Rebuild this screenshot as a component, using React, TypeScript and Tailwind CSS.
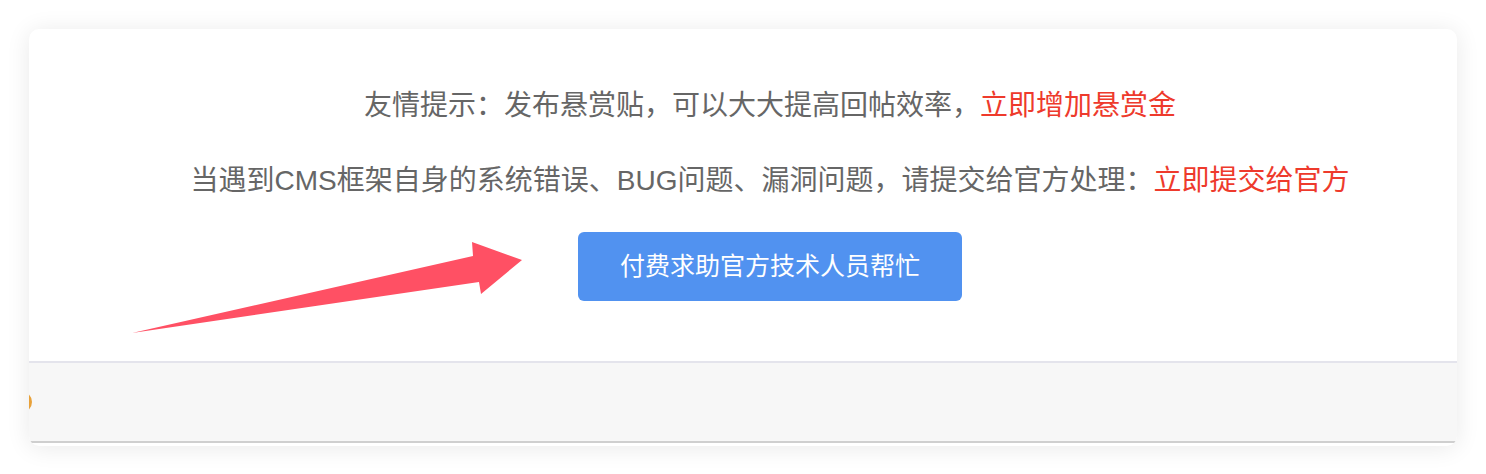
export default function App() {
  const font = { fontFamily: '"Liberation Sans", "Noto Sans CJK SC", sans-serif' };

  return (
    <div className="min-h-screen bg-white pt-[29px] pl-[29px] pr-[29px]" style={font}>
      <div className="relative w-[1428px] rounded-[10px] bg-white shadow-[0_2px_24px_rgba(0,0,0,0.09)] overflow-hidden pb-[3px]">
        {/* 主体提示 */}
        <div className="flex flex-col items-center pl-[54px] pt-[57px] pb-[60px] border-b-2 border-[#e4e4ec]">
          <p className="text-[28px] leading-[40px] text-[#666666]">
            友情提示：发布悬赏贴，可以大大提高回帖效率，
            <a className="text-[#ee3a2c]">立即增加悬赏金</a>
          </p>
          <p className="mt-[35px] text-[28px] leading-[40px] text-[#666666]">
            当遇到CMS框架自身的系统错误、BUG问题、漏洞问题，请提交给官方处理：
            <a className="text-[#ee3a2c]">立即提交给官方</a>
          </p>
          <button className="mt-[31px] w-[384px] h-[69px] rounded-[6px] bg-[#5192f0] text-white text-[25px]">
            付费求助官方技术人员帮忙
          </button>
        </div>

        {/* 底部栏 */}
        <div className="h-[80px] bg-[#f7f7f7] border-b-2 border-[#cfcfcf] flex items-center">
          <div className="-ml-[19px] w-[22px] h-[22px] rounded-full border-[3px] border-[#e8a13a]" />
        </div>

        {/* 箭头 */}
        <svg
          className="absolute left-0 top-0 pointer-events-none"
          width="520"
          height="320"
          viewBox="0 0 520 320"
        >
          <polygon
            points="103,304 444,227 443,213 493,231 452,265 450,253"
            fill="#ff5064"
          />
        </svg>
      </div>
    </div>
  );
}
